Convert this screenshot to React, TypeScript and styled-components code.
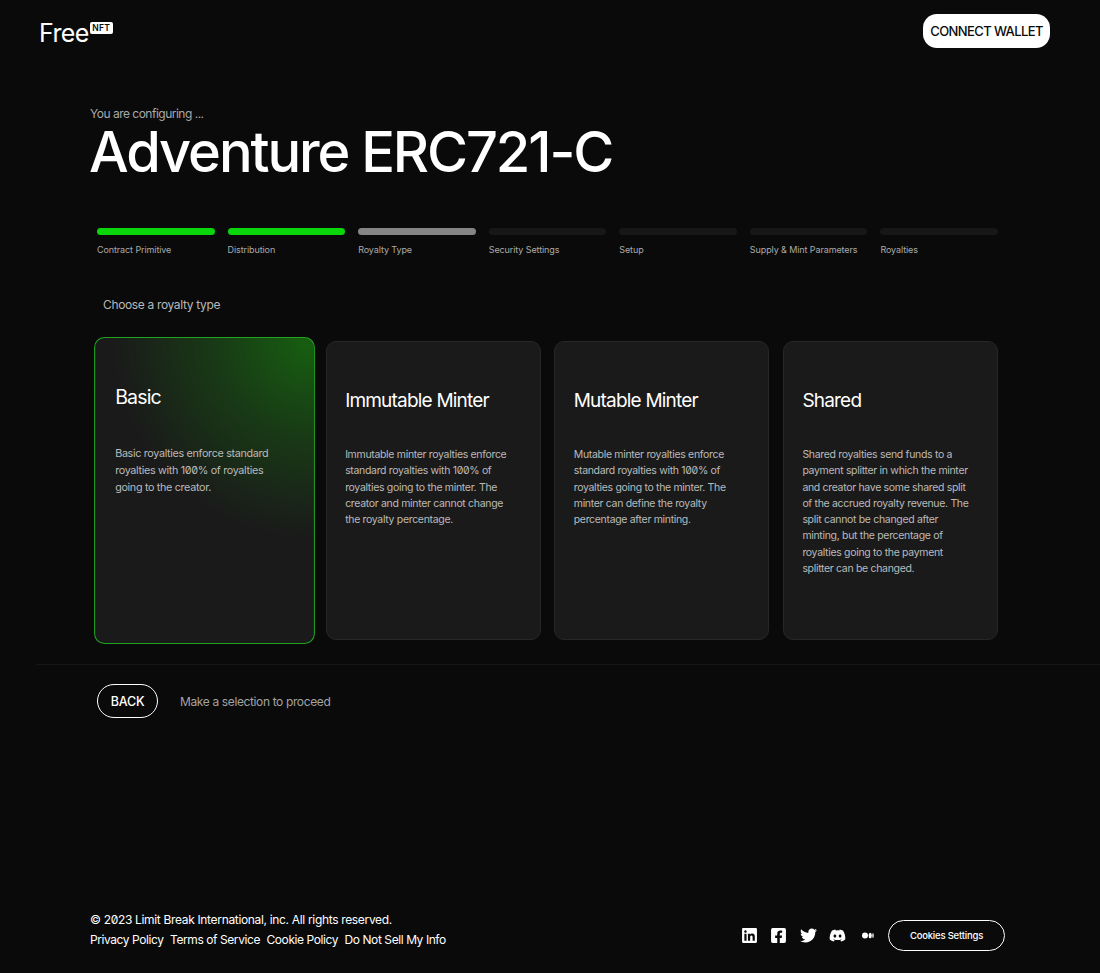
import React from "react";
import styled, { createGlobalStyle } from "styled-components";
import { FaLinkedin, FaFacebookSquare, FaTwitter, FaDiscord } from "react-icons/fa";

const GlobalStyle = createGlobalStyle`
  html, body {
    margin: 0;
    padding: 0;
    background: #0a0a0a;
    font-family: Inter, "Liberation Sans", sans-serif;
    color: #fff;
  }
  * { box-sizing: border-box; }
`;

const Page = styled.div`
  width: 1100px;
  height: 973px;
  display: flex;
  flex-direction: column;
  overflow: hidden;
`;

const Header = styled.header`
  height: 76px;
  padding: 14px 50px 0 39px;
  display: flex;
  justify-content: space-between;
  align-items: flex-start;
`;

const Logo = styled.div`
  display: flex;
  align-items: flex-start;
  padding-top: 6px;
  font-size: 25px;
  line-height: 26px;
  letter-spacing: -0.6px;
`;

const LogoBadge = styled.span`
  background: #fff;
  color: #0a0a0a;
  font-size: 8.5px;
  font-weight: 600;
  line-height: 10px;
  padding: 1px 2.5px;
  border-radius: 2px;
  margin: 2px 0 0 1px;
  letter-spacing: 0.3px;
`;

const ConnectButton = styled.button`
  height: 34px;
  width: 127px;
  border: none;
  border-radius: 14px;
  background: #fff;
  color: #0a0a0a;
  font-family: inherit;
  font-size: 13px;
  font-weight: 500;
  letter-spacing: -0.6px;
  padding: 0;
`;

const Intro = styled.section`
  padding: 28px 0 0 90px;
  height: 152px;
`;

const Eyebrow = styled.div`
  font-size: 12px;
  line-height: 16px;
  padding-top: 2px;
  color: #a9a9a9;
  letter-spacing: -0.5px;
`;

const Title = styled.h1`
  margin: 2px 0 0 -1px;
  font-size: 56px;
  line-height: 56px;
  font-weight: 500;
  letter-spacing: -2.1px;
`;

const Steps = styled.div`
  margin: 0 102px 0 97px;
  display: grid;
  grid-template-columns: repeat(7, 1fr);
  column-gap: 13px;
`;

const Step = styled.div`
  display: flex;
  flex-direction: column;
  gap: 9px;
`;

const StepBar = styled.div<{ $state: "done" | "current" | "todo" }>`
  height: 7px;
  border-radius: 4px;
  background: ${(props) =>
    props.$state === "done" ? "#0bd50b" : props.$state === "current" ? "#858585" : "#171717"};
`;

const StepLabel = styled.span`
  font-size: 9px;
  line-height: 12px;
  color: #ababab;
  letter-spacing: -0.1px;
  white-space: nowrap;
`;

const Prompt = styled.div`
  margin: 41px 0 0 103px;
  font-size: 12px;
  line-height: 16px;
  color: #b8b8b8;
  letter-spacing: -0.35px;
`;

const Cards = styled.div`
  margin: 28px 102px 0 97px;
  display: grid;
  grid-template-columns: repeat(4, 1fr);
  column-gap: 13.5px;
`;

const Card = styled.div<{ $selected?: boolean }>`
  height: 299px;
  border-radius: 10px;
  padding: ${(props) => (props.$selected ? "46px 25px 0 19.5px" : "47px 25px 0 18.5px")};
  border: ${(props) => (props.$selected ? "1.5px solid #20a520" : "1px solid #272727")};
  background: ${(props) =>
    props.$selected
      ? "radial-gradient(ellipse 195px 195px at 100% 0%, #175c11 0%, #175c11 6%, rgba(23,92,17,0.5) 48%, rgba(26,26,26,0) 100%), #1a1a1a"
      : "#1a1a1a"};
  transform: ${(props) => (props.$selected ? "scale(1.027)" : "none")};
`;

const CardTitle = styled.h2`
  margin: 0;
  font-size: 19px;
  line-height: 24px;
  font-weight: 400;
  color: #fff;
  letter-spacing: -0.8px;
`;

const CardText = styled.p<{ $selected?: boolean }>`
  margin: ${(props) => (props.$selected ? "35px" : "34px")} 0 0;
  font-size: 10.5px;
  line-height: 16.3px;
  color: #bababa;
  letter-spacing: -0.32px;
  font-variant-numeric: slashed-zero;
`;

const Divider = styled.div`
  margin: 24px 0 0 36px;
  height: 1px;
  background: #161616;
`;

const Actions = styled.div`
  margin: 19px 0 0 97px;
  display: flex;
  align-items: center;
  gap: 22px;
`;

const BackButton = styled.button`
  width: 61px;
  height: 34px;
  border-radius: 17px;
  border: 1px solid #fff;
  background: transparent;
  color: #fff;
  font-family: inherit;
  font-size: 12.5px;
  font-weight: 500;
  letter-spacing: -0.2px;
  padding: 0;
`;

const Hint = styled.span`
  font-size: 12px;
  color: #a3a3a3;
  letter-spacing: -0.37px;
`;

const Footer = styled.footer`
  margin-top: auto;
  padding: 0 95px 22px 90px;
  display: flex;
  justify-content: space-between;
  align-items: flex-end;
`;

const Legal = styled.div`
  display: flex;
  flex-direction: column;
  gap: 4px;
  padding-bottom: 3px;
  font-size: 12px;
  line-height: 16px;
  letter-spacing: -0.33px;
  font-variant-numeric: slashed-zero;
`;

const LegalLinks = styled.div`
  display: flex;
  gap: 6.5px;
  letter-spacing: -0.42px;
`;

const Socials = styled.div`
  display: flex;
  align-items: center;
  gap: 12.5px;
  color: #fff;
`;

const MediumGlyph = styled.svg`
  margin-left: 3px;
`;

const CookiesButton = styled.button`
  width: 117px;
  height: 31px;
  margin-left: 2px;
  border-radius: 16px;
  border: 1px solid #fff;
  background: transparent;
  color: #fff;
  font-family: inherit;
  font-size: 9.5px;
  font-weight: 500;
  letter-spacing: -0.2px;
  padding: 0;
`;

const MediumIcon = () => (
  <MediumGlyph width="12" height="17" viewBox="0 0 12 17" fill="currentColor">
    <ellipse cx="3" cy="8.5" rx="3" ry="3" />
    <ellipse cx="8.2" cy="8.5" rx="1.6" ry="2.8" />
    <ellipse cx="11" cy="8.5" rx="0.7" ry="2.5" />
  </MediumGlyph>
);

const steps: { label: string; state: "done" | "current" | "todo" }[] = [
  { label: "Contract Primitive", state: "done" },
  { label: "Distribution", state: "done" },
  { label: "Royalty Type", state: "current" },
  { label: "Security Settings", state: "todo" },
  { label: "Setup", state: "todo" },
  { label: "Supply & Mint Parameters", state: "todo" },
  { label: "Royalties", state: "todo" },
];

const cards = [
  {
    title: "Basic",
    text: "Basic royalties enforce standard royalties with 100% of royalties going to the creator.",
    selected: true,
  },
  {
    title: "Immutable Minter",
    text: "Immutable minter royalties enforce standard royalties with 100% of royalties going to the minter. The creator and minter cannot change the royalty percentage.",
  },
  {
    title: "Mutable Minter",
    text: "Mutable minter royalties enforce standard royalties with 100% of royalties going to the minter. The minter can define the royalty percentage after minting.",
  },
  {
    title: "Shared",
    text: "Shared royalties send funds to a payment splitter in which the minter and creator have some shared split of the accrued royalty revenue. The split cannot be changed after minting, but the percentage of royalties going to the payment splitter can be changed.",
  },
];

const App: React.FC = () => {
  return (
    <Page>
      <GlobalStyle />
      <Header>
        <Logo>
          Free<LogoBadge>NFT</LogoBadge>
        </Logo>
        <ConnectButton>CONNECT WALLET</ConnectButton>
      </Header>
      <Intro>
        <Eyebrow>You are configuring ...</Eyebrow>
        <Title>Adventure ERC721-C</Title>
      </Intro>
      <Steps>
        {steps.map((step) => (
          <Step key={step.label}>
            <StepBar $state={step.state} />
            <StepLabel>{step.label}</StepLabel>
          </Step>
        ))}
      </Steps>
      <Prompt>Choose a royalty type</Prompt>
      <Cards>
        {cards.map((card) => (
          <Card key={card.title} $selected={card.selected}>
            <CardTitle>{card.title}</CardTitle>
            <CardText $selected={card.selected}>{card.text}</CardText>
          </Card>
        ))}
      </Cards>
      <Divider />
      <Actions>
        <BackButton>BACK</BackButton>
        <Hint>Make a selection to proceed</Hint>
      </Actions>
      <Footer>
        <Legal>
          <span>© 2023 Limit Break International, inc. All rights reserved.</span>
          <LegalLinks>
            <span>Privacy Policy</span>
            <span>Terms of Service</span>
            <span>Cookie Policy</span>
            <span>Do Not Sell My Info</span>
          </LegalLinks>
        </Legal>
        <Socials>
          <FaLinkedin size={17} />
          <FaFacebookSquare size={17} />
          <FaTwitter size={17} />
          <FaDiscord size={17} />
          <MediumIcon />
          <CookiesButton>Cookies Settings</CookiesButton>
        </Socials>
      </Footer>
    </Page>
  );
};

export default App;
